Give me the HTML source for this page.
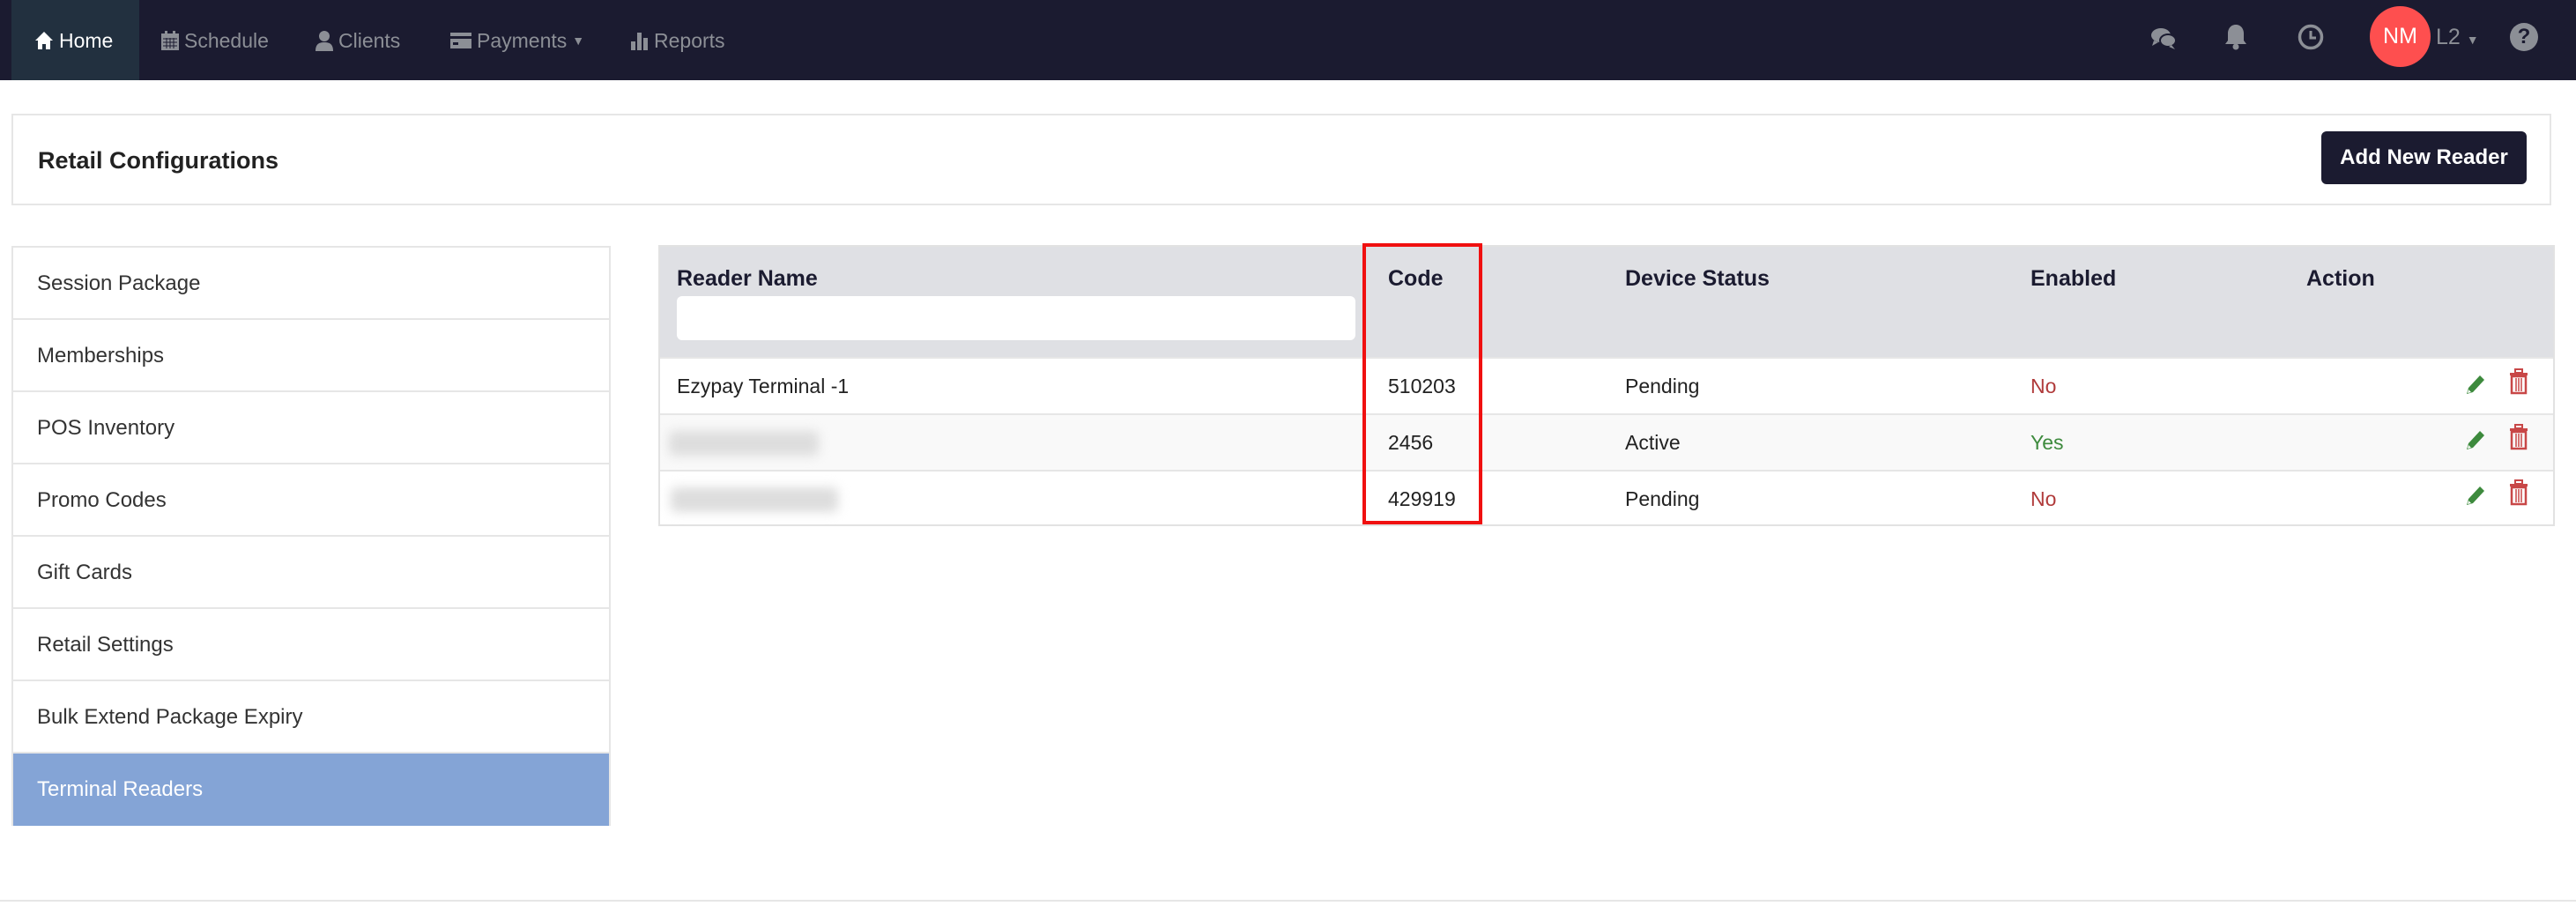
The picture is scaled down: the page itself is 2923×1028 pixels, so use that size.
<!DOCTYPE html>
<html><head><meta charset="utf-8"><style>
*{box-sizing:border-box;margin:0;padding:0}
body{width:2923px;height:1028px;background:#fff;font-family:"Liberation Sans",sans-serif;position:relative;overflow:hidden;color:#222}
.nav{position:absolute;left:0;top:0;width:2923px;height:91px;background:#1b1b30}
.ni{position:absolute;top:0;height:91px;line-height:86px;font-size:23px;color:#8c8f96;display:flex;align-items:center;gap:6px}
.home{left:13px;width:145px;background:#22303f;color:#fff;padding-left:26px}
.abs{position:absolute}
.panel{position:absolute;left:13px;top:129px;width:2882px;height:104px;border:2px solid #e6e6e6}
.title{position:absolute;left:28px;top:36px;font-size:27px;font-weight:bold;color:#222}
.btn{position:absolute;left:2634px;top:149px;width:233px;height:60px;background:#1b1b30;color:#fff;border-radius:6px;font-size:24px;font-weight:bold;text-align:center;line-height:60px}
.side{position:absolute;left:13px;top:279px;width:680px;border:2px solid #e6e6e6;border-bottom:none}
.si{height:82px;line-height:82px;padding-left:27px;font-size:24px;color:#333;border-bottom:2px solid #e6e6e6}
.si.act{background:#84a4d6;color:#fff;border-color:#84a4d6}
.tbl{position:absolute;left:747px;top:278px;width:2152px;height:319px;border:2px solid #e2e2e2;overflow:hidden}
.th{position:absolute;left:0;top:0;width:100%;height:125px;background:#dfe0e4}
.h{position:absolute;top:22px;font-size:25px;font-weight:bold;color:#1b1b30}
.inp{position:absolute;left:19px;top:56px;width:770px;height:50px;background:#fff;border-radius:6px}
.row{position:absolute;left:0;width:100%;height:64px;border-top:2px solid #e6e6e6}
.c{position:absolute;top:0;line-height:62px;font-size:23px;color:#222}
.blur{position:absolute;top:18px;height:28px;background:#ddd;filter:blur(6px);border-radius:6px}
</style></head><body>
<div class="nav">
 <div class="ni home"><svg width="22" height="22" viewBox="0 0 22 22"><path d="M11 1L1 11h3v10h5v-6h4v6h5V11h3z" fill="#fff"/></svg>Home</div>
 <div class="ni" style="left:183px"><svg width="20" height="22" viewBox="0 0 20 22"><rect x="0" y="3" width="20" height="19" fill="#8c8f96"/><rect x="4" y="0" width="3" height="5" fill="#8c8f96"/><rect x="13" y="0" width="3" height="5" fill="#8c8f96"/><path d="M2 9h16M2 13h16M2 17h16M6 8v12M10 8v12M14 8v12" stroke="#1b1b30" stroke-width="1"/></svg>Schedule</div>
 <div class="ni" style="left:358px"><svg width="20" height="24" viewBox="0 0 20 24"><circle cx="10" cy="7" r="6" fill="#8c8f96"/><path d="M0 24c0-8 4-10 10-10s10 2 10 10z" fill="#8c8f96"/></svg>Clients</div>
 <div class="ni" style="left:511px"><svg width="24" height="20" viewBox="0 0 24 20"><rect x="0" y="1" width="24" height="18" fill="#8c8f96"/><rect x="0" y="5" width="24" height="3" fill="#1b1b30"/><rect x="3" y="12" width="6" height="3" fill="#1b1b30"/></svg>Payments <span style="font-size:14px">▼</span></div>
 <div class="ni" style="left:716px"><svg width="20" height="22" viewBox="0 0 20 22"><rect x="0" y="12" width="5" height="10" fill="#8c8f96"/><rect x="7" y="2" width="5" height="20" fill="#8c8f96"/><rect x="14" y="8" width="5" height="14" fill="#8c8f96"/></svg>Reports</div>
 <svg class="abs" style="left:2440px;top:30px" width="30" height="28" viewBox="0 0 30 28"><ellipse cx="12" cy="10" rx="11" ry="8" fill="#8c8f96"/><path d="M4 16l-2 6 7-4z" fill="#8c8f96"/><ellipse cx="20" cy="16" rx="9" ry="7" fill="#8c8f96" stroke="#1b1b30" stroke-width="2"/><path d="M24 21l4 5-7-3z" fill="#8c8f96"/></svg>
 <svg class="abs" style="left:2524px;top:26px" width="26" height="32" viewBox="0 0 26 32"><path d="M13 2c-6 0-9 5-9 10v8l-3 4h24l-3-4v-8c0-5-3-10-9-10z" fill="#8c8f96"/><circle cx="13" cy="27" r="3.5" fill="#8c8f96"/></svg>
 <svg class="abs" style="left:2607px;top:27px" width="30" height="30" viewBox="0 0 30 30"><circle cx="15" cy="15" r="12.5" fill="none" stroke="#8c8f96" stroke-width="3.5"/><path d="M15 8v8h6" fill="none" stroke="#8c8f96" stroke-width="3"/></svg>
 <div class="abs" style="left:2689px;top:7px;width:69px;height:69px;border-radius:50%;background:#fe4f4f;color:#fff;font-size:25px;text-align:center;line-height:69px">NM</div>
 <div class="abs" style="left:2764px;top:28px;font-size:25px;color:#8c8f96">L2 <span style="font-size:14px">▼</span></div>
 <div class="abs" style="left:2848px;top:26px;width:32px;height:32px;border-radius:50%;background:#8c8f96;color:#1b1b30;font-weight:bold;font-size:24px;text-align:center;line-height:32px">?</div>
</div>
<div class="panel"><div class="title">Retail Configurations</div></div>
<div class="btn">Add New Reader</div>
<div class="side">
 <div class="si">Session Package</div><div class="si">Memberships</div><div class="si">POS Inventory</div><div class="si">Promo Codes</div><div class="si">Gift Cards</div><div class="si">Retail Settings</div><div class="si">Bulk Extend Package Expiry</div><div class="si act">Terminal Readers</div>
</div>
<div class="abs" style="left:0;top:1021px;width:2923px;height:2px;background:#e6e6e6"></div>
<div class="tbl">
 <div class="th">
  <div class="h" style="left:19px">Reader Name</div><div class="inp"></div>
  <div class="h" style="left:826px">Code</div>
  <div class="h" style="left:1095px">Device Status</div>
  <div class="h" style="left:1555px">Enabled</div>
  <div class="h" style="left:1868px">Action</div>
 </div>
 <div class="row" style="top:125px;background:#fff"><div class="c" style="left:19px">Ezypay Terminal -1</div><div class="c" style="left:826px">510203</div><div class="c" style="left:1095px">Pending</div><div class="c" style="left:1555px;color:#b03a3a">No</div></div>
 <div class="row" style="top:189px;background:#f9f9f9"><div class="blur" style="left:10px;width:170px"></div><div class="c" style="left:826px">2456</div><div class="c" style="left:1095px">Active</div><div class="c" style="left:1555px;color:#3d8a3d">Yes</div></div>
 <div class="row" style="top:253px;background:#fff"><div class="blur" style="left:12px;width:190px"></div><div class="c" style="left:826px">429919</div><div class="c" style="left:1095px">Pending</div><div class="c" style="left:1555px;color:#b03a3a">No</div></div>
</div>
<svg class="abs" style="left:0;top:0" width="2923" height="1028">
 <g id="ic">
 <g transform="translate(2797,423)"><path d="M2 24l2-7 13-14 5 5-13 14z" fill="#3d8a3d"/><path d="M3 23l1-4 3 3z" fill="#fff"/></g>
 <g transform="translate(2848,419)"><rect x="6" y="0" width="8" height="4" fill="none" stroke="#c84747" stroke-width="2"/><rect x="0" y="4" width="20" height="3" fill="#c84747"/><rect x="2" y="8" width="16" height="19" fill="none" stroke="#c84747" stroke-width="2.5"/><path d="M7 10v15M10 10v15M13 10v15" stroke="#c84747" stroke-width="1.5"/></g>
 </g>
 <use href="#ic" y="63"/><use href="#ic" y="126"/>
 <rect x="1548" y="278" width="132" height="315" fill="none" stroke="#f01010" stroke-width="4"/>
</svg>
</body></html>
